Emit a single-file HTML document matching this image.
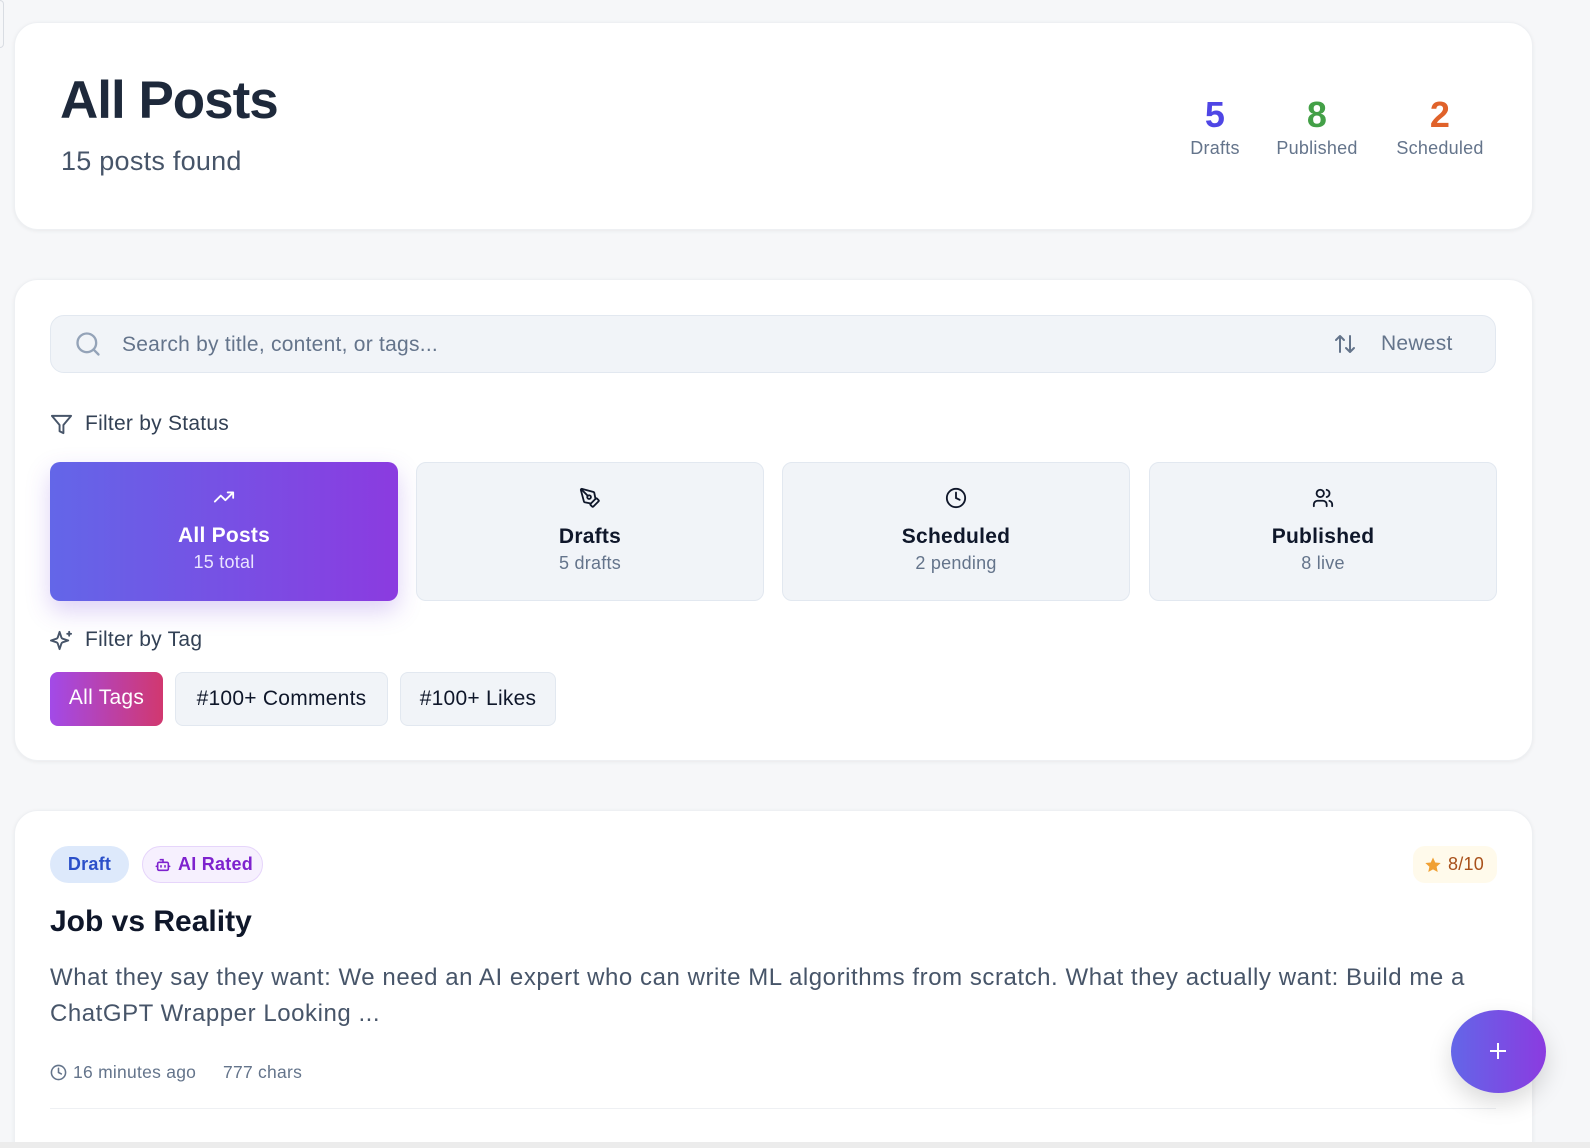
<!DOCTYPE html>
<html style="width:1590px;height:1148px;overflow:hidden"><head><meta charset="utf-8"><style>
*{box-sizing:border-box;margin:0;padding:0}
body{width:1590px;height:1148px;overflow:hidden;background:#f6f7f9;font-family:"Liberation Sans",sans-serif;position:relative;letter-spacing:0.25px}
.abs{position:absolute}
.card{position:absolute;background:#fff;border-radius:24px;box-shadow:0 1px 4px rgba(0,0,0,.06);border:1px solid #eef0f3}
.st{position:absolute;top:462px;height:139px;width:348px;border-radius:10px;background:#f1f4f8;border:1px solid #e2e8f0;text-align:center}
.st svg{position:absolute;left:50%;top:24px;margin-left:-11px}
.st .t{position:absolute;left:0;right:0;top:62px;font-size:21px;font-weight:600;color:#0f172a}
.st .s{position:absolute;left:0;right:0;top:90px;font-size:18px;color:#64748b}
.tag{position:absolute;top:672px;height:54px;border-radius:8px;background:#f1f4f8;border:1px solid #e2e8f0;font-size:21px;color:#0f172a;line-height:52px;text-align:center}
</style></head><body>
<div class="abs" style="left:0;top:0;width:4px;height:48px;border:1px solid #d9dde3;border-left:none;border-radius:0 4px 4px 0"></div>

<div class="card" style="left:14px;top:22px;width:1519px;height:208px"></div>
<div class="abs" style="left:60px;top:70px;font-size:53px;font-weight:700;color:#1e293b;letter-spacing:-1px">All Posts</div>
<div class="abs" style="left:61px;top:146px;font-size:27px;color:#475569">15 posts found</div>
<div class="abs" style="left:1180px;top:94px;width:70px;text-align:center"><div style="font-size:36px;font-weight:700;color:#4f46e5;line-height:42px">5</div><div style="font-size:18px;color:#64748b;margin-top:2px">Drafts</div></div>
<div class="abs" style="left:1267px;top:94px;width:100px;text-align:center"><div style="font-size:36px;font-weight:700;color:#43a047;line-height:42px">8</div><div style="font-size:18px;color:#64748b;margin-top:2px">Published</div></div>
<div class="abs" style="left:1390px;top:94px;width:100px;text-align:center"><div style="font-size:36px;font-weight:700;color:#e0622a;line-height:42px">2</div><div style="font-size:18px;color:#64748b;margin-top:2px">Scheduled</div></div>

<div class="card" style="left:14px;top:279px;width:1519px;height:482px"></div>
<div class="abs" style="left:50px;top:315px;width:1446px;height:58px;background:#f1f4f8;border:1px solid #e2e8f0;border-radius:14px"></div>
<svg class="abs" style="left:74px;top:330px" width="28" height="28" viewBox="0 0 24 24" fill="none" stroke="#94a3b8" stroke-width="2" stroke-linecap="round"><circle cx="11" cy="11" r="8"/><path d="M21 21l-4.3-4.3"/></svg>
<div class="abs" style="left:122px;top:333px;font-size:21px;color:#64748b">Search by title, content, or tags...</div>
<svg class="abs" style="left:1333px;top:332px" width="24" height="24" viewBox="0 0 24 24" fill="none" stroke="#64748b" stroke-width="2" stroke-linecap="round" stroke-linejoin="round"><path d="M7 20V4M3 8l4-4 4 4M17 4v16M13 16l4 4 4-4"/></svg>
<div class="abs" style="left:1381px;top:332px;font-size:21px;color:#64748b">Newest</div>

<svg class="abs" style="left:50px;top:413px" width="23" height="23" viewBox="0 0 24 24" fill="none" stroke="#475569" stroke-width="2" stroke-linejoin="round"><path d="M22 3H2l8 9.5V19l4 2v-8.5z"/></svg>
<div class="abs" style="left:85px;top:412px;font-size:21px;color:#334155">Filter by Status</div>

<div class="st" style="left:50px;background:linear-gradient(90deg,#6366e8,#8b3be0);border:none;box-shadow:0 10px 24px rgba(120,70,220,.25)">
<svg width="22" height="22" viewBox="0 0 24 24" fill="none" stroke="#fff" stroke-width="2" stroke-linecap="round" stroke-linejoin="round"><path d="M22 7l-8.5 8.5-5-5L2 17M16 7h6v6"/></svg>
<div class="t" style="color:#fff">All Posts</div><div class="s" style="color:#e9e3ff">15 total</div></div>
<div class="st" style="left:416px"><svg width="22" height="22" viewBox="0 0 24 24" fill="none" stroke="#0f172a" stroke-width="2" stroke-linecap="round" stroke-linejoin="round"><path d="M15.7 21.3a1 1 0 0 1-1.4 0l-1.6-1.6a1 1 0 0 1 0-1.4l5.6-5.6a1 1 0 0 1 1.4 0l1.6 1.6a1 1 0 0 1 0 1.4z"/><path d="m18 13-1.4-6.9a1 1 0 0 0-.7-.7L3.2 2 2 3.2l3.4 12.7a1 1 0 0 0 .7.7L13 18"/><path d="m2.3 2.3 7.3 7.3"/><circle cx="11" cy="11" r="2"/></svg><div class="t">Drafts</div><div class="s">5 drafts</div></div>
<div class="st" style="left:782px"><svg width="22" height="22" viewBox="0 0 24 24" fill="none" stroke="#0f172a" stroke-width="2" stroke-linecap="round"><circle cx="12" cy="12" r="10"/><path d="M12 6v6l4 2"/></svg><div class="t">Scheduled</div><div class="s">2 pending</div></div>
<div class="st" style="left:1149px"><svg width="22" height="22" viewBox="0 0 24 24" fill="none" stroke="#0f172a" stroke-width="2" stroke-linecap="round"><path d="M16 21v-2a4 4 0 0 0-4-4H6a4 4 0 0 0-4 4v2"/><circle cx="9" cy="7" r="4"/><path d="M22 21v-2a4 4 0 0 0-3-3.9M16 3.1a4 4 0 0 1 0 7.8"/></svg><div class="t">Published</div><div class="s">8 live</div></div>

<svg class="abs" style="left:50px;top:629px" width="23" height="23" viewBox="0 0 24 24" fill="none" stroke="#475569" stroke-width="2" stroke-linejoin="round" stroke-linecap="round"><path d="M10 3l1.9 5.8a2 2 0 0 0 1.3 1.3L19 12l-5.8 1.9a2 2 0 0 0-1.3 1.3L10 21l-1.9-5.8a2 2 0 0 0-1.3-1.3L1 12l5.8-1.9a2 2 0 0 0 1.3-1.3z"/><path d="M20 3v4M22 5h-4"/></svg>
<div class="abs" style="left:85px;top:628px;font-size:21px;color:#334155">Filter by Tag</div>
<div class="tag" style="left:50px;width:113px;border:none;background:linear-gradient(90deg,#a24ae8,#d1386f);color:#fff">All Tags</div>
<div class="tag" style="left:175px;width:213px">#100+ Comments</div>
<div class="tag" style="left:400px;width:156px">#100+ Likes</div>

<div class="card" style="left:14px;top:810px;width:1519px;height:360px"></div>
<div class="abs" style="left:50px;top:846px;width:79px;height:37px;border-radius:19px;background:#dde9fb;color:#2b50c9;font-size:18px;font-weight:600;text-align:center;line-height:37px">Draft</div>
<div class="abs" style="left:142px;top:846px;width:121px;height:37px;border-radius:19px;background:#f6f0fe;border:1px solid #e6d5fb;color:#7e22ce;font-size:18px;font-weight:600;line-height:35px;padding-left:35px">AI Rated</div>
<svg class="abs" style="left:155px;top:857px" width="16" height="16" viewBox="0 0 24 24" fill="none" stroke="#7e22ce" stroke-width="2.4" stroke-linecap="round"><path d="M12 8V4H8"/><rect x="4" y="8" width="16" height="12" rx="2"/><path d="M2 14h2M20 14h2M15 13v2M9 13v2"/></svg>
<div class="abs" style="left:1413px;top:846px;width:84px;height:37px;border-radius:12px;background:#fffaeb;color:#a8501a;font-size:18px;line-height:37px;padding-left:35px">8/10</div>
<svg class="abs" style="left:1424px;top:856px" width="18" height="18" viewBox="0 0 24 24" fill="#f0a033"><path d="M12 2l3 6.6 7.2.8-5.4 4.9 1.5 7.1L12 17.8 5.7 21.4l1.5-7.1L1.8 9.4 9 8.6z"/></svg>
<div class="abs" style="left:50px;top:905px;font-size:30px;font-weight:700;color:#0f172a;letter-spacing:0">Job vs Reality</div>
<div class="abs" style="left:50px;top:960px;width:1460px;font-size:24px;line-height:36px;color:#475569;letter-spacing:0.55px">What they say they want: We need an AI expert who can write ML algorithms from scratch. What they actually want: Build me a<br>ChatGPT Wrapper Looking ...</div>
<svg class="abs" style="left:50px;top:1064px" width="17" height="17" viewBox="0 0 24 24" fill="none" stroke="#64748b" stroke-width="2.2" stroke-linecap="round"><circle cx="12" cy="12" r="10"/><path d="M12 6v6l4 2"/></svg>
<div class="abs" style="left:73px;top:1062px;font-size:17.5px;color:#64748b">16 minutes ago</div>
<div class="abs" style="left:223px;top:1062px;font-size:17.5px;color:#64748b">777 chars</div>
<div class="abs" style="left:50px;top:1108px;width:1446px;height:1px;background:#eef0f3"></div>

<div class="abs" style="left:1451px;top:1010px;width:95px;height:83px;border-radius:50%;background:linear-gradient(90deg,#6366e8,#8b3be0);box-shadow:0 10px 24px rgba(0,0,0,.15)"></div>
<svg class="abs" style="left:1488px;top:1041px" width="20" height="20" viewBox="0 0 20 20" stroke="#fff" stroke-width="2"><path d="M10 2v16M2 10h16"/></svg>
<div class="abs" style="left:0;top:1142px;width:1590px;height:6px;background:#ececec"></div>
</body></html>
